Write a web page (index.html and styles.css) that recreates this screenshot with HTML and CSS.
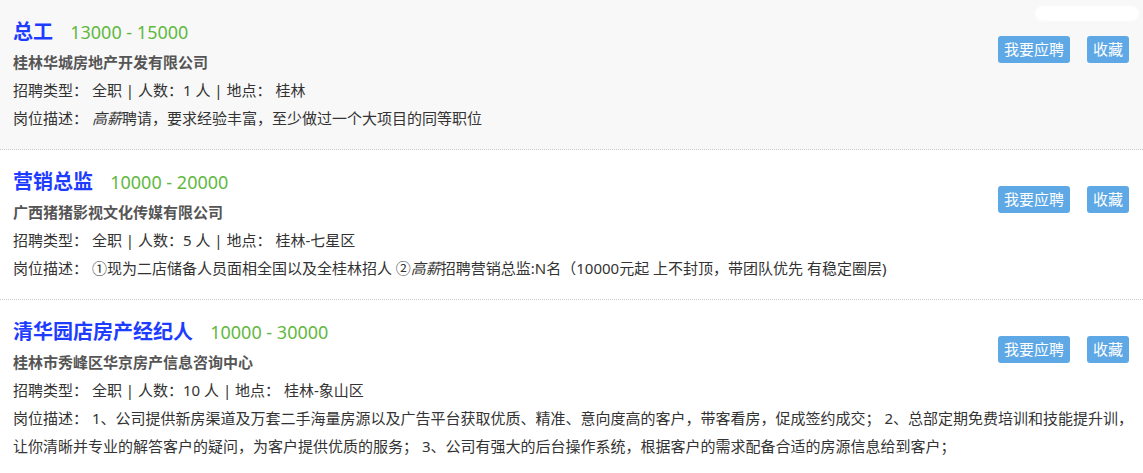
FILE: index.html
```html
<!DOCTYPE html>
<html lang="zh-CN">
<head>
  <meta charset="UTF-8">
  <meta name="viewport" content="width=device-width,initial-scale=1.0">
  <title>职位列表</title>
  <link rel="stylesheet" href="styles.css">
</head>
<body>
  <ul class="job-list">
    <li class="job active">
      <div class="job-head">
        <div class="job-info">
          <h3 class="job-title">总工 <span class="salary">13000 - 15000</span></h3>
          <p class="company">桂林华城房地产开发有限公司</p>
          <p class="meta">招聘类型： 全职 | 人数：1 人 | 地点： 桂林</p>
        </div>
        <div class="job-actions">
          <a class="btn" href="#">我要应聘</a>
          <a class="btn" href="#">收藏</a>
        </div>
      </div>
      <p class="desc">岗位描述： <em>高薪</em>聘请，要求经验丰富，至少做过一个大项目的同等职位</p>
      <span class="smudge"></span>
    </li>
    <li class="job">
      <div class="job-head">
        <div class="job-info">
          <h3 class="job-title">营销总监 <span class="salary">10000 - 20000</span></h3>
          <p class="company">广西猪猪影视文化传媒有限公司</p>
          <p class="meta">招聘类型： 全职 | 人数：5 人 | 地点： 桂林-七星区</p>
        </div>
        <div class="job-actions">
          <a class="btn" href="#">我要应聘</a>
          <a class="btn" href="#">收藏</a>
        </div>
      </div>
      <p class="desc">岗位描述： ①现为二店储备人员面相全国以及全桂林招人 ②<em>高薪</em>招聘营销总监:N名（10000元起 上不封顶，带团队优先 有稳定圈层)</p>
    </li>
    <li class="job">
      <div class="job-head">
        <div class="job-info">
          <h3 class="job-title">清华园店房产经纪人 <span class="salary">10000 - 30000</span></h3>
          <p class="company">桂林市秀峰区华京房产信息咨询中心</p>
          <p class="meta">招聘类型： 全职 | 人数：10 人 | 地点： 桂林-象山区</p>
        </div>
        <div class="job-actions">
          <a class="btn" href="#">我要应聘</a>
          <a class="btn" href="#">收藏</a>
        </div>
      </div>
      <p class="desc">岗位描述： 1、公司提供新房渠道及万套二手海量房源以及广告平台获取优质、精准、意向度高的客户，带客看房，促成签约成交； 2、总部定期免费培训和技能提升训，让你清晰并专业的解答客户的疑问，为客户提供优质的服务； 3、公司有强大的后台操作系统，根据客户的需求配备合适的房源信息给到客户；</p>
    </li>
  </ul>
</body>
</html>
```

FILE: styles.css
```css
:root {
  --title: #1e3cff;
  --salary: #62b83f;
  --text: #333;
  --company: #555;
  --btn: #5ea8e6;
  --line: #ccc;
}
* { box-sizing: border-box; }
body {
  margin: 0;
  font-family: "Noto Sans", "Noto Sans CJK SC", sans-serif;
  color: var(--text);
  background: #fff;
}
.job-list {
  list-style: none;
  margin: 0;
  padding: 0;
}
.job {
  position: relative;
  padding: 16px 4px 17px 13px;
  border-bottom: 1px dotted var(--line);
}
.job.active { background: #f8f8f8; }

.job-head {
  display: flex;
  align-items: flex-start;
}
.job-info { flex: 1; min-width: 0; }
.job p {
  margin: 0;
  font-size: 15px;
  line-height: 28px;
}
.job em { font-style: italic; }
.job-title {
  margin: 0;
  font-size: 20px;
  line-height: 32px;
  font-weight: bold;
  color: var(--title);
}
.salary {
  margin-left: 12px;
  font-size: 18px;
  font-weight: normal;
  color: var(--salary);
}
.job .company {
  font-weight: bold;
  color: var(--company);
}

.job-actions {
  display: flex;
  gap: 17px;
  padding-top: 20px;
  margin: 0 10px 0 20px;
}
.btn {
  display: block;
  padding: 0 6px;
  height: 27px;
  line-height: 27px;
  font-size: 15px;
  color: #fff;
  background: var(--btn);
  border-radius: 3px;
  text-decoration: none;
}

.smudge {
  position: absolute;
  top: 6px;
  right: 4px;
  width: 104px;
  height: 15px;
  background: #fff;
  border-radius: 8px;
  filter: blur(1px);
}
```
